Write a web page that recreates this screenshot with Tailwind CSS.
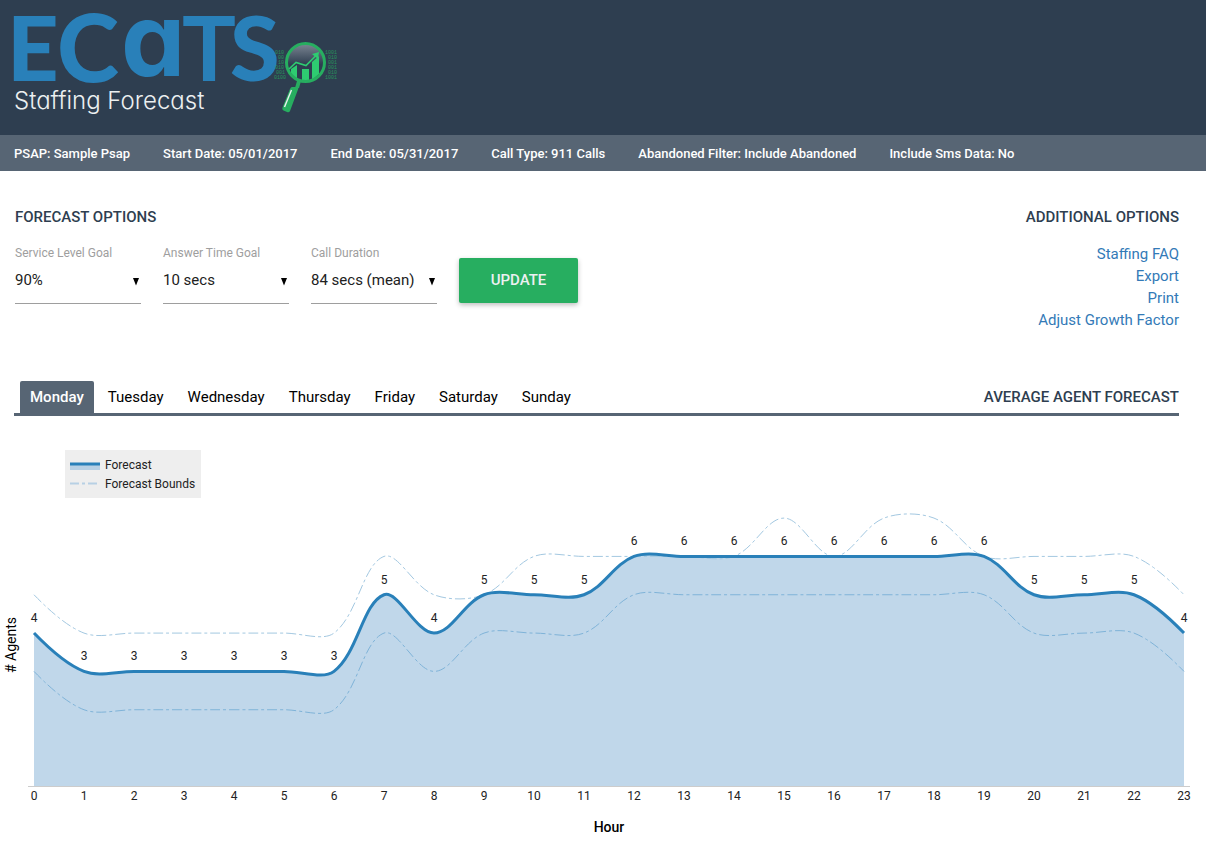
<!DOCTYPE html>
<html lang="en">
<head>
    <meta charset="UTF-8">
    <meta name="viewport" content="width=device-width, initial-scale=1.0">
    <title>ECaTS Staffing Forecast</title>
    <script src="https://cdn.jsdelivr.net/npm/@tailwindcss/browser@4"></script>
</head>
<body class="bg-white font-['Roboto',sans-serif] text-black">
    <header class="bg-[#2e3e50] px-[14px] pt-3 h-[135px]">
        <svg class="w-[330px] h-[110px] overflow-visible" viewBox="14 12 330 110" role="img" aria-label="ECaTS Staffing Forecast">
            <defs>
                <linearGradient id="lens" x1="0" y1="0" x2="0" y2="1">
                    <stop offset="0" stop-color="#7d8794"/>
                    <stop offset="0.55" stop-color="#2e3e50"/>
                </linearGradient>
            </defs>
            <text fill="#2980b9" class="font-['Lato',sans-serif] font-bold text-[90px]" y="81"><tspan class="font-black" x="7">E</tspan><tspan class="font-black text-[94px]" x="57" y="82">C</tspan><tspan class="font-['Inter',sans-serif] text-[102px] [font-feature-settings:'cv11']" x="121" y="76">a</tspan><tspan x="182" y="81">T</tspan><tspan class="font-black" x="230">S</tspan></text>
            <text fill="#ecf0f1" class="font-['Inter',sans-serif] font-light text-[24px] [font-feature-settings:'cv11']" x="14" y="109">Staffing Forecast</text>
            <!-- binary digits behind the glass -->
            <g fill="#27ae60" opacity="0.75" class="font-['Liberation_Mono',monospace] text-[5px]">
                <text x="275" y="54">010</text>
                <text x="278" y="59">00</text>
                <text x="278" y="64">10</text>
                <text x="275" y="69">010</text>
                <text x="276" y="74">001</text>
                <text x="274" y="79">0100</text>
                <text x="325" y="54">1001</text>
                <text x="328" y="59">010</text>
                <text x="328" y="64">001</text>
                <text x="328" y="69">001</text>
                <text x="328" y="74">010</text>
                <text x="325" y="79">1001</text>
            </g>
            <circle cx="305.500" cy="62.500" r="19" fill="url(#lens)"/>
            <path fill="#2ecc71" d="M291 69L297 65V80L291 75zM302 69h7v13h-7zM312 62l7-6v18l-7 6z"/>
            <path d="M289 69L296 62.500L306 65.500L316 55.500" fill="none" stroke="#2ecc71" stroke-width="1.600"/>
            <path d="M312 54l7-2l-1 7z" fill="#2ecc71"/>
            <circle cx="305.500" cy="62.500" r="19" fill="none" stroke="#27ae60" stroke-width="3"/>
            <path d="M297 81h4l-2 7h-4z" fill="#27ae60"/>
            <path d="M292 87h5q2 0 1 2.500L290 111q-1 2-3 1l-3.500-1.500q-2-1-1-3L290 89q1-2 2-2z" fill="#27ae60"/>
            <path d="M291.500 90L284.500 107" stroke="#ecf0f1" stroke-width="1.400"/>
        </svg>
    </header>

    <div class="bg-[#576574] text-white text-[13px] font-medium h-9 px-[14px] pt-px flex items-center gap-[33px]">
        <span>PSAP: Sample Psap</span>
        <span>Start Date: 05/01/2017</span>
        <span>End Date: 05/31/2017</span>
        <span>Call Type: 911 Calls</span>
        <span>Abandoned Filter: Include Abandoned</span>
        <span>Include Sms Data: No</span>
    </div>

    <main>
        <section class="flex justify-between pl-[15px] pr-[27px] pt-9">
            <div>
                <h2 class="text-[15px] leading-5 font-medium text-[#2e3e50]">FORECAST OPTIONS</h2>
                <form class="flex items-start gap-[22px] mt-[18px]">
                    <div class="w-[126px]">
                        <label for="serviceLevel" class="block text-[12px] leading-4 text-[#9e9e9e]">Service Level Goal</label>
                        <div class="relative">
                            <select id="serviceLevel" class="appearance-none w-full h-[43px] pb-1 text-[15px] text-[#212121] border-b border-[#9e9e9e]">
                                <option>90%</option>
                            </select>
                            <svg class="absolute right-px top-[17px] w-2 h-2 pointer-events-none" viewBox="0 0 8 8"><path d="M1 0h6L4 7.500z"/></svg>
                        </div>
                    </div>
                    <div class="w-[126px]">
                        <label for="answerTime" class="block text-[12px] leading-4 text-[#9e9e9e]">Answer Time Goal</label>
                        <div class="relative">
                            <select id="answerTime" class="appearance-none w-full h-[43px] pb-1 text-[15px] text-[#212121] border-b border-[#9e9e9e]">
                                <option>10 secs</option>
                            </select>
                            <svg class="absolute right-px top-[17px] w-2 h-2 pointer-events-none" viewBox="0 0 8 8"><path d="M1 0h6L4 7.500z"/></svg>
                        </div>
                    </div>
                    <div class="w-[126px]">
                        <label for="callDuration" class="block text-[12px] leading-4 text-[#9e9e9e]">Call Duration</label>
                        <div class="relative">
                            <select id="callDuration" class="appearance-none w-full h-[43px] pb-1 text-[15px] text-[#212121] border-b border-[#9e9e9e]">
                                <option>84 secs (mean)</option>
                            </select>
                            <svg class="absolute right-px top-[17px] w-2 h-2 pointer-events-none" viewBox="0 0 8 8"><path d="M1 0h6L4 7.500z"/></svg>
                        </div>
                    </div>
                    <button type="button" class="mt-[13px] w-[119px] h-[45px] rounded-[2px] bg-[#27ae60] text-[#ecf0f1] text-[15px] font-medium shadow-[0_2px_5px_rgba(0,0,0,0.26)]">UPDATE</button>
                </form>
            </div>
            <div class="text-right">
                <h2 class="text-[15px] leading-5 font-medium text-[#2e3e50]">ADDITIONAL OPTIONS</h2>
                <nav class="flex flex-col items-end mt-4 text-[15px] leading-[22px] text-[#337ab7]">
                    <a href="#">Staffing FAQ</a>
                    <a href="#">Export</a>
                    <a href="#">Print</a>
                    <a href="#">Adjust Growth Factor</a>
                </nav>
            </div>
        </section>

        <section class="mt-[50px]">
            <div class="flex justify-between ml-[14px] mr-[27px] pl-[6px] border-b-3 border-[#576574]">
                <nav class="flex gap-1 text-[15px] leading-8">
                    <a href="#" class="px-[10px] rounded-t-[2px] bg-[#576574] text-white font-medium">Monday</a>
                    <a href="#" class="px-[10px]">Tuesday</a>
                    <a href="#" class="px-[10px]">Wednesday</a>
                    <a href="#" class="px-[10px]">Thursday</a>
                    <a href="#" class="px-[10px]">Friday</a>
                    <a href="#" class="px-[10px]">Saturday</a>
                    <a href="#" class="px-[10px]">Sunday</a>
                </nav>
                <h2 class="text-[15px] leading-8 font-medium text-[#2e3e50]">AVERAGE AGENT FORECAST</h2>
            </div>

            <svg id="chart" class="block w-full h-auto" viewBox="0 416 1206 445" text-anchor="middle">
                <g>
                    <path id="area" fill="#c0d7ea"/>
                    <path d="M28 786.500H1190" stroke="#cccccc"/>
                    <path id="lower" fill="none" stroke="#7fb3d8" stroke-dasharray="10 3 3 3"/>
                    <path id="upper" fill="none" stroke="#a3c8e1" stroke-dasharray="10 3 3 3"/>
                    <path id="line" fill="none" stroke="#2980b9" stroke-width="3"/>
                </g>
                <g id="labels" fill="#222222" class="text-[12px]"></g>
                <g text-anchor="start" class="text-[12px]">
                    <rect x="65" y="450" width="136" height="48" fill="#eeeeee"/>
                    <rect x="70" y="464" width="30" height="6" fill="#b7d0e4"/>
                    <path d="M70 464H100" stroke="#2980b9" stroke-width="3"/>
                    <path d="M70 483.500H98" stroke="#b7d0e4" stroke-width="2" stroke-dasharray="9 3 3 3"/>
                    <text x="105" y="469" fill="#222222">Forecast</text>
                    <text x="105" y="488" fill="#222222">Forecast Bounds</text>
                </g>
                <text transform="translate(16 645) rotate(-90)" class="text-[14px]"># Agents</text>
                <text x="609" y="832" class="text-[14px] font-medium">Hour</text>
            </svg>
        </section>
    </main>

    <script>
        const forecast = [4,3,3,3,3,3,3,5,4,5,5,5,6,6,6,6,6,6,6,6,5,5,5,4];
        const upper = [5,4,4,4,4,4,4,6,5,5,6,6,6,6,6,7,6,7,7,6,6,6,6,5];
        const lower = forecast.map(v => v - 1);

        const X0 = 34, STEP = 50, Y0 = 786.4, UNIT = 38.33, TENSION = 0.35;
        const px = x => (X0 + x * STEP).toFixed(2);
        const py = y => (Y0 - y * UNIT).toFixed(2);
        const pt = p => px(p[0]) + ' ' + py(p[1]);

        // control points before and after point i
        function controls(data, i) {
            const d1 = Math.hypot(1, data[i] - data[i - 1]);
            const d2 = Math.hypot(1, data[i + 1] - data[i]);
            const a = TENSION * d1 / (d1 + d2);
            const b = TENSION - a;
            const dy = data[i + 1] - data[i - 1];
            return [[i - 2 * a, data[i] - a * dy], [i + 2 * b, data[i] + b * dy]];
        }

        function spline(data) {
            const last = data.length - 1;
            let d = 'M' + pt([0, data[0]]) + 'Q' + pt(controls(data, 1)[0]) + ' ' + pt([1, data[1]]);
            for (let i = 1; i < last - 1; i++) {
                d += 'C' + pt(controls(data, i)[1]) + ' ' + pt(controls(data, i + 1)[0]) + ' ' + pt([i + 1, data[i + 1]]);
            }
            return d + 'Q' + pt(controls(data, last - 1)[1]) + ' ' + pt([last, data[last]]);
        }

        const line = spline(forecast);
        document.getElementById('line').setAttribute('d', line);
        document.getElementById('area').setAttribute('d', line + 'V' + Y0 + 'H' + X0 + 'Z');
        document.getElementById('upper').setAttribute('d', spline(upper));
        document.getElementById('lower').setAttribute('d', spline(lower));

        function addLabel(x, y, text) {
            const el = document.createElementNS('http://www.w3.org/2000/svg', 'text');
            el.setAttribute('x', x);
            el.setAttribute('y', y);
            el.textContent = text;
            document.getElementById('labels').appendChild(el);
        }

        forecast.forEach((v, i) => {
            addLabel(px(i), Math.round(Y0 - v * UNIT) - 11, v);
            addLabel(px(i), 800, i);
        });
    </script>
</body>
</html>
